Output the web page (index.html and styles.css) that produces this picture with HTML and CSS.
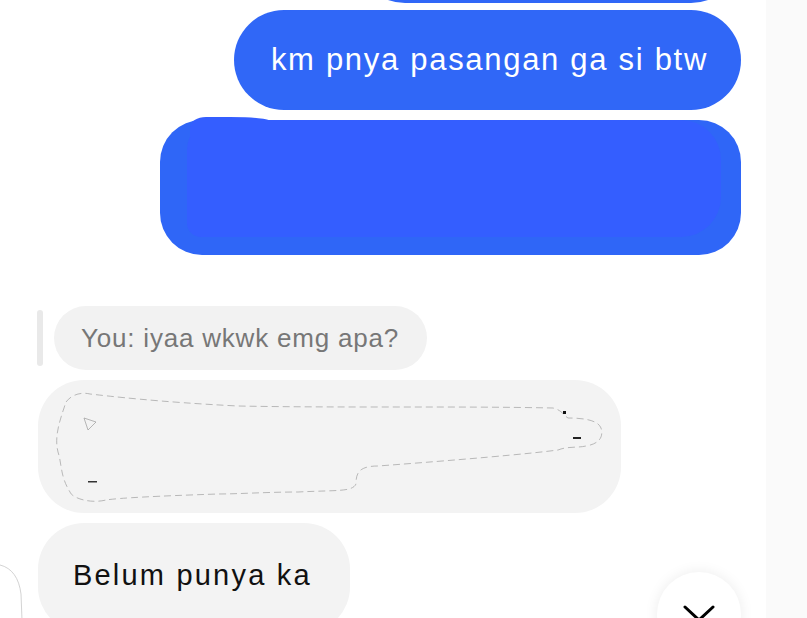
FILE: index.html
```html
<!DOCTYPE html>
<html>
<head>
<meta charset="utf-8">
<link rel="stylesheet" href="styles.css">
</head>
<body>
<div class="screen">
  <div class="chat">
    <div class="row out">
      <div class="bubble blue b0"></div>
    </div>
    <div class="row out">
      <div class="bubble blue b1">km pnya pasangan ga si btw</div>
    </div>
    <div class="row out">
      <div class="bubble blue b2">
        <div class="redact-blue"></div>
        <div class="redact-bump"></div>
      </div>
    </div>
    <div class="row in reply-row">
      <div class="reply-bar"></div>
      <div class="bubble reply">You: iyaa wkwk emg apa?</div>
    </div>
    <div class="row in">
      <div class="bubble grey b3">
        <svg class="scribble" width="583" height="133" viewBox="0 0 583 133">
          <path d="M28 22 C34 14 44 12 52 14 C70 16 120 22 200 26 C300 28 420 26 515 28 C524 30 526 36 530 38 C545 38 560 40 563 48 C566 58 560 64 548 66 C540 68 530 66 520 70 C490 74 420 80 340 86 C320 86 318 94 318 104 C314 112 300 110 260 112 C230 112 200 114 180 114 C120 116 80 118 68 120 C52 124 34 118 32 112 C22 96 24 84 20 72 C16 56 22 40 28 22 Z" fill="none" stroke="#a8a8a8" stroke-width="0.8" stroke-dasharray="7 4"/>
          <path d="M46 38 L58 42 L50 50 Z" fill="none" stroke="#999" stroke-width="0.7"/>
          <rect x="525" y="31" width="3" height="3" fill="#111"/>
          <rect x="535" y="57" width="8" height="2" fill="#222"/>
          <rect x="50" y="101" width="9" height="1.5" fill="#333"/>
        </svg>
      </div>
    </div>
    <div class="row in">
      <div class="bubble grey b4">Belum punya ka</div>
    </div>
  </div>
  <div class="rail"></div>
  <svg class="avatar-edge" width="30" height="60" viewBox="0 0 30 60">
    <path d="M0 5 C12 8 19 18 21 34 L22 60" fill="none" stroke="#c8c8c8" stroke-width="0.8"/>
  </svg>
  <div class="scroll-btn">
    <svg width="36" height="20" viewBox="0 0 36 20">
      <path d="M4 5 L18 18 L32 5" fill="none" stroke="#000" stroke-width="3" stroke-linecap="round" stroke-linejoin="round"/>
    </svg>
  </div>
</div>
</body>
</html>
```

FILE: styles.css
```css
* { box-sizing: border-box; }
html, body {
  margin: 0;
  padding: 0;
  background: #ffffff;
}
.screen {
  position: relative;
  width: 807px;
  height: 618px;
  overflow: hidden;
  display: flex;
  font-family: "Liberation Sans", Arial, sans-serif;
}
.chat {
  flex: 0 0 766px;
  display: flex;
  flex-direction: column;
  padding: 0 25px 0 37px;
}
.rail {
  flex: 1;
  background: #fafafa;
}
.row {
  display: flex;
  flex-shrink: 0;
}
.row.out { justify-content: flex-end; }
.row.in { justify-content: flex-start; }

.bubble {
  display: flex;
  align-items: center;
  flex-shrink: 0;
}
.blue {
  background: #3067f7;
  color: #ffffff;
}
.b0 {
  width: 386px;
  height: 100px;
  margin-top: -97px;
  border-radius: 50px;
}
.b1 {
  margin-top: 7px;
  height: 100px;
  border-radius: 50px;
  padding: 0 33px 0 37px;
  font-size: 31px;
  letter-spacing: 1.7px;
}
.b2 {
  margin-top: 10px;
  width: 581px;
  height: 135px;
  border-radius: 42px;
  background: #2f66f7;
  position: relative;
}
.redact-blue {
  position: absolute;
  left: 27px;
  top: 0;
  right: 20px;
  bottom: 18px;
  background: #345eff;
  border-radius: 30px 40px 40px 14px;
}
.redact-bump {
  position: absolute;
  left: 30px;
  top: -3px;
  width: 80px;
  height: 20px;
  background: #345eff;
  border-radius: 16px 40px 0 0 / 10px 4px 0 0;
}
.reply-row {
  margin-top: 51px;
  align-items: center;
  gap: 11px;
}
.reply-bar {
  width: 6px;
  height: 56px;
  border-radius: 3px;
  background: #e9e9e9;
}
.reply {
  height: 64px;
  border-radius: 32px;
  background: #f2f2f2;
  color: #777777;
  padding: 0 28px 0 27px;
  font-size: 26px;
  letter-spacing: 0.8px;
}
.grey {
  background: #f3f3f3;
  color: #111111;
}
.b3 {
  margin-top: 10px;
  margin-left: 1px;
  width: 583px;
  height: 133px;
  border-radius: 46px;
  position: relative;
}
.scribble {
  position: absolute;
  left: 0;
  top: 0;
}
.b4 {
  margin-top: 10px;
  margin-left: 1px;
  height: 110px;
  border-radius: 46px;
  padding: 36px 38px 10px 35px;
  font-size: 29px;
  letter-spacing: 2.2px;
  align-items: flex-start;
}
.avatar-edge {
  position: absolute;
  left: 0;
  top: 560px;
}
.scroll-btn {
  position: absolute;
  left: 657px;
  top: 572px;
  width: 84px;
  height: 84px;
  border-radius: 50%;
  background: #ffffff;
  box-shadow: 0 0 14px rgba(0,0,0,0.08);
  display: flex;
  justify-content: center;
  align-items: flex-start;
  padding-top: 30px;
}
```
